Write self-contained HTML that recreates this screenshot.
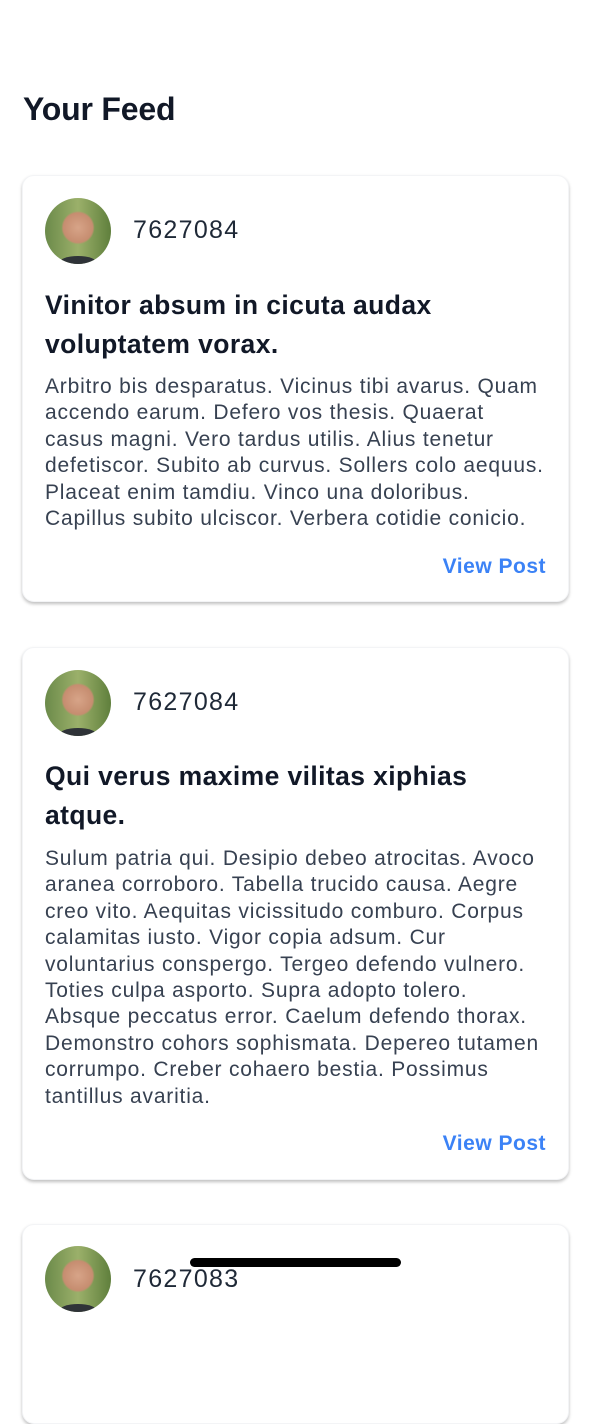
<!DOCTYPE html>
<html><head><meta charset="utf-8"><style>
*{margin:0;padding:0;box-sizing:border-box}
body{width:591px;height:1280px;overflow:hidden;background:#fff;font-family:"Liberation Sans",Arial,sans-serif;position:relative;color:#111827}
h1{position:absolute;left:23px;top:90px;font-size:32px;font-weight:700;letter-spacing:-0.2px;line-height:38px}
.card{position:absolute;left:22px;width:547px;background:#fff;border-radius:12px;border:1px solid #f3f4f6;box-shadow:0 2px 3px rgba(0,0,0,0.25)}
.av{position:absolute;left:22px;width:66px;height:66px;border-radius:50%;overflow:hidden;background:radial-gradient(circle at 50% 45%,#d7a488 0,#c68d70 30%,transparent 34%),linear-gradient(90deg,#6b8a4a,#9bb06a 50%,#5f7f3c);}
.av:after{content:"";position:absolute;left:14px;bottom:-6px;width:38px;height:14px;border-radius:50%;background:#2f3338}
.name{position:absolute;left:110px;font-size:25px;color:#1f2937;letter-spacing:1.3px}
.title{position:absolute;left:22px;white-space:nowrap;font-size:26.5px;font-weight:700;line-height:39px;color:#111827;letter-spacing:0.4px}
.body{position:absolute;left:22px;white-space:nowrap;font-size:21px;line-height:26.4px;color:#374151;letter-spacing:0.8px}
.vp{position:absolute;right:22px;font-size:21px;font-weight:700;color:#3b82f6;letter-spacing:0.5px}
.bar{position:absolute;left:190px;top:1258px;width:211px;height:9px;border-radius:5px;background:#000}
</style></head><body>
<h1>Your Feed</h1>

<div class="card" style="top:175px;height:427px">
 <div class="av" style="top:22px"></div>
 <div class="name" style="top:40px">7627084</div>
 <div class="title" style="top:110px">Vinitor absum in cicuta audax<br>voluptatem vorax.</div>
 <div class="body" style="top:198px">Arbitro bis desparatus. Vicinus tibi avarus. Quam<br>accendo earum. Defero vos thesis. Quaerat<br>casus magni. Vero tardus utilis. Alius tenetur<br>defetiscor. Subito ab curvus. Sollers colo aequus.<br>Placeat enim tamdiu. Vinco una doloribus.<br>Capillus subito ulciscor. Verbera cotidie conicio.</div>
 <div class="vp" style="top:379px">View Post</div>
</div>

<div class="card" style="top:647px;height:533px">
 <div class="av" style="top:22px"></div>
 <div class="name" style="top:40px">7627084</div>
 <div class="title" style="top:109px">Qui verus maxime vilitas xiphias<br>atque.</div>
 <div class="body" style="top:198px">Sulum patria qui. Desipio debeo atrocitas. Avoco<br>aranea corroboro. Tabella trucido causa. Aegre<br>creo vito. Aequitas vicissitudo comburo. Corpus<br>calamitas iusto. Vigor copia adsum. Cur<br>voluntarius conspergo. Tergeo defendo vulnero.<br>Toties culpa asporto. Supra adopto tolero.<br>Absque peccatus error. Caelum defendo thorax.<br>Demonstro cohors sophismata. Depereo tutamen<br>corrumpo. Creber cohaero bestia. Possimus<br>tantillus avaritia.</div>
 <div class="vp" style="top:484px">View Post</div>
</div>

<div class="card" style="top:1224px;height:200px">
 <div class="av" style="top:21px"></div>
 <div class="name" style="top:40px">7627083</div>
</div>
<div class="bar"></div>
</body></html>
